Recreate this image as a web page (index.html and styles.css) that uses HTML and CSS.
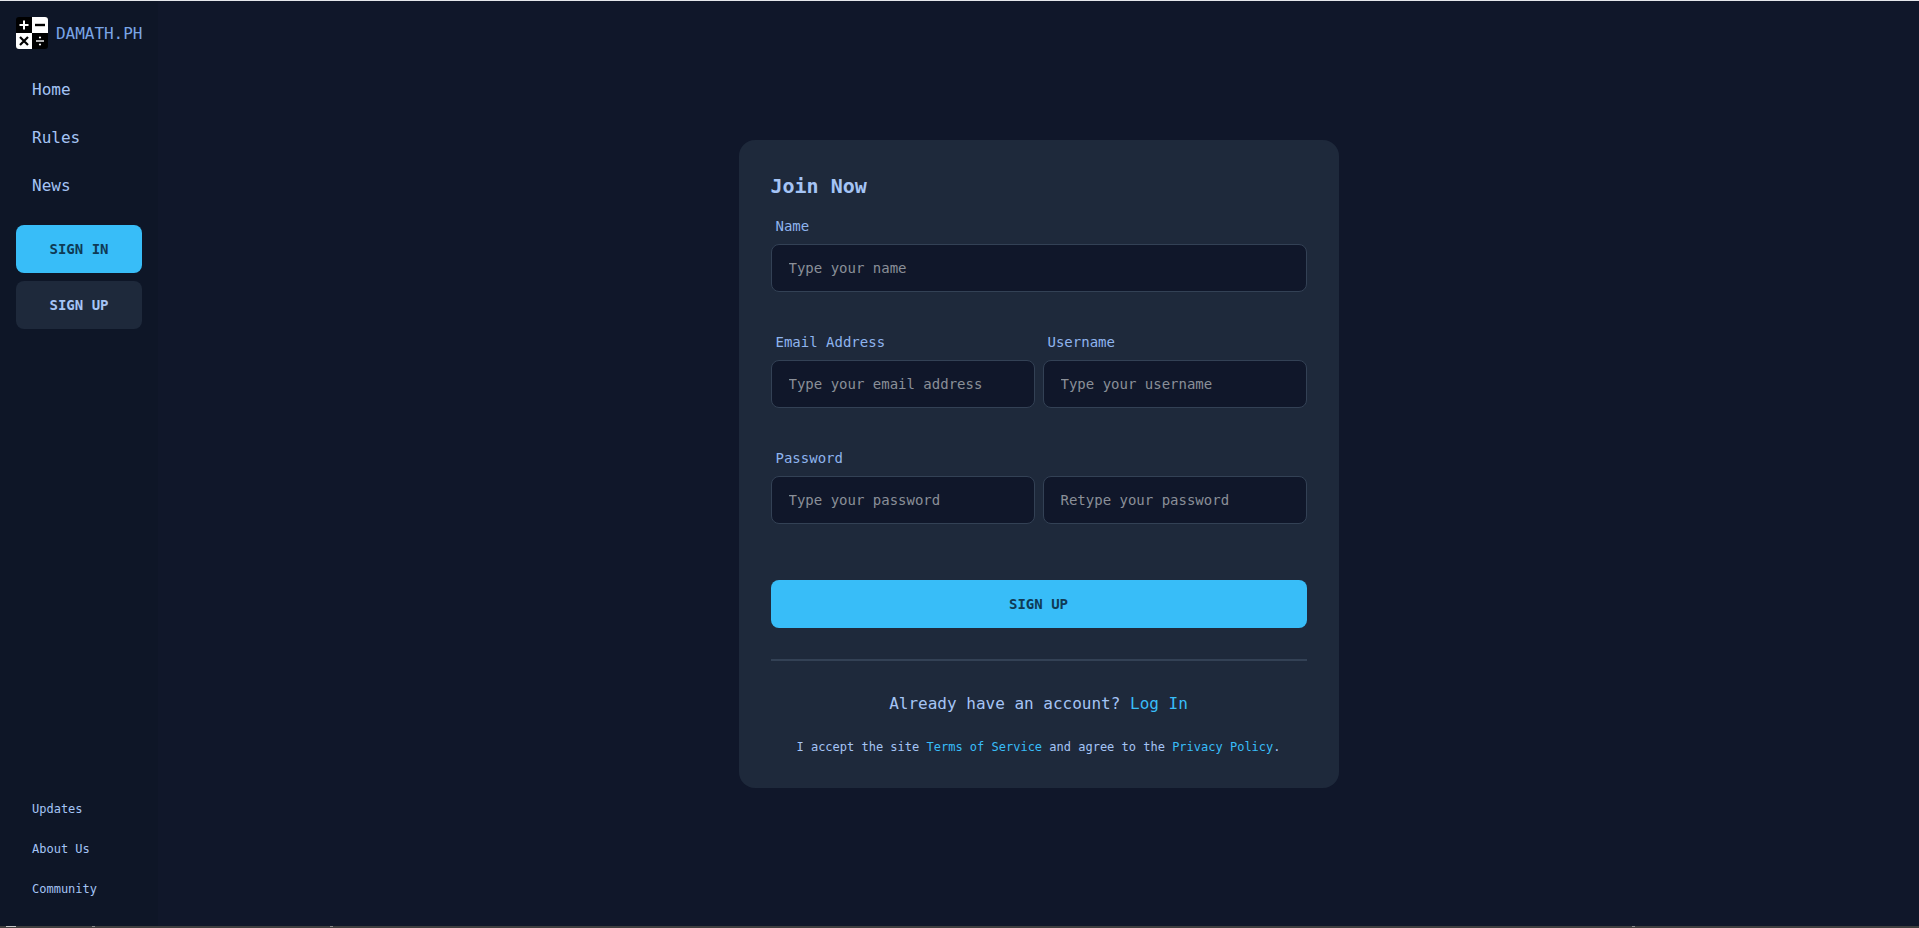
FILE: index.html
```html
<!DOCTYPE html>
<html lang="en">
<head>
    <meta charset="UTF-8">
    <meta name="viewport" content="width=device-width, initial-scale=1.0">
    <title>Damath.ph - Sign Up</title>
    <link rel="stylesheet" href="styles.css">
</head>
<body>
    <div class="app">
        <aside class="sidebar">
            <a class="brand" href="#">
                <svg class="brand-logo" width="32" height="32" viewBox="0 0 32 32">
                    <rect width="32" height="32" rx="3" fill="#000"/>
                    <path d="M16 0h13a3 3 0 0 1 3 3v13H16zM0 16h16v16H3a3 3 0 0 1-3-3z" fill="#fff"/>
                    <path d="M8 3.5v9M3.5 8h9" stroke="#fff" stroke-width="2"/>
                    <path d="M19 8h10" stroke="#000" stroke-width="2.4"/>
                    <path d="M4 20l8 8M12 20l-8 8" stroke="#000" stroke-width="2.2"/>
                    <path d="M20 24h8" stroke="#fff" stroke-width="1.4"/>
                    <circle cx="24" cy="20.5" r="1.1" fill="#fff"/>
                    <circle cx="24" cy="27.5" r="1.1" fill="#fff"/>
                </svg>
                <span>DAMATH.PH</span>
            </a>
            <nav class="main-nav">
                <a href="#">Home</a>
                <a href="#">Rules</a>
                <a href="#">News</a>
            </nav>
            <div class="side-buttons">
                <a class="btn btn-primary" href="#">SIGN IN</a>
                <a class="btn btn-dark" href="#">SIGN UP</a>
            </div>
            <nav class="foot-nav">
                <a href="#">Updates</a>
                <a href="#">About Us</a>
                <a href="#">Community</a>
            </nav>
        </aside>

        <main class="content">
            <form class="card">
                <h1>Join Now</h1>
                <div class="row">
                    <div class="field">
                        <label for="name">Name</label>
                        <input type="text" id="name" placeholder="Type your name">
                    </div>
                </div>
                <div class="row two">
                    <div class="field">
                        <label for="email">Email Address</label>
                        <input type="text" id="email" placeholder="Type your email address">
                    </div>
                    <div class="field">
                        <label for="username">Username</label>
                        <input type="text" id="username" placeholder="Type your username">
                    </div>
                </div>
                <div class="row two">
                    <div class="field">
                        <label for="password">Password</label>
                        <input type="password" id="password" placeholder="Type your password">
                    </div>
                    <div class="field">
                        <label class="blank">&nbsp;</label>
                        <input type="password" id="password2" placeholder="Retype your password">
                    </div>
                </div>
                <button type="submit" class="btn btn-primary submit">SIGN UP</button>
                <hr>
                <p class="login">Already have an account? <a href="#">Log In</a></p>
                <p class="terms">I accept the site <a href="#">Terms of Service</a> and agree to the <a href="#">Privacy Policy</a>.</p>
            </form>
        </main>
    </div>
    <div class="bottom-strip"></div>
</body>
</html>
```

FILE: styles.css
```css
* {
    box-sizing: border-box;
}
html, body {
    height: 100%;
}
body {
    margin: 0;
    display: flex;
    flex-direction: column;
    overflow: hidden;
    background-color: #10172a;
    border-top: 1px solid #e5e7eb;
    font-family: "DejaVu Sans Mono", "Liberation Mono", monospace;
    color: #a5c4f5;
}
a {
    color: inherit;
    text-decoration: none;
}
.app {
    flex: 1;
    display: flex;
    min-height: 0;
}
.sidebar {
    width: 158px;
    flex-shrink: 0;
    display: flex;
    flex-direction: column;
    padding: 16px 16px 0;
    background-color: #0e1627;
}
.brand {
    display: flex;
    align-items: center;
    gap: 8px;
    font-size: 16px;
    letter-spacing: -0.03px;
    color: #7aa5e6;
    white-space: nowrap;
}
.brand-logo {
    flex-shrink: 0;
}
.main-nav {
    display: flex;
    flex-direction: column;
    margin-top: 16px;
}
.main-nav a {
    height: 48px;
    display: flex;
    align-items: center;
    padding-left: 16px;
    font-size: 16px;
}
.side-buttons {
    display: flex;
    flex-direction: column;
    gap: 8px;
    margin-top: 16px;
}
.btn {
    height: 48px;
    display: flex;
    align-items: center;
    justify-content: center;
    border: none;
    border-radius: 8px;
    font-family: inherit;
    font-size: 14px;
    font-weight: bold;
}
.btn-primary {
    background-color: #38bdf8;
    color: #0f3a55;
}
.btn-dark {
    background-color: #1e293b;
    color: #a5c4f5;
}
.foot-nav {
    margin-top: auto;
    display: flex;
    flex-direction: column;
    padding-bottom: 17px;
}
.foot-nav a {
    height: 40px;
    display: flex;
    align-items: center;
    padding-left: 16px;
    font-size: 12px;
}
.content {
    flex: 1;
    display: flex;
    justify-content: center;
    padding-top: 139px;
}
.card {
    width: 600px;
    height: 648px;
    padding: 32px;
    background-color: #1e293b;
    border-radius: 16px;
}
h1 {
    margin: 0 0 16px;
    font-size: 20px;
    line-height: 28px;
    font-weight: bold;
    color: #a5c4f5;
}
.row {
    display: flex;
    gap: 8px;
    margin-bottom: 40px;
}
.field {
    flex: 1;
    min-width: 0;
}
label {
    display: block;
    padding-left: 5px;
    margin-bottom: 8px;
    font-size: 14px;
    line-height: 20px;
    color: #8fb4ee;
}
input {
    width: 100%;
    height: 48px;
    padding: 0 17px;
    background-color: #10172a;
    border: 1px solid #334155;
    border-radius: 8px;
    font-family: inherit;
    font-size: 14px;
    color: #a5c4f5;
}
input::placeholder {
    color: #8a8f98;
    opacity: 1;
}
.submit {
    width: 100%;
    margin-top: 56px;
}
hr {
    margin: 31px 0 0;
    border: none;
    height: 2px;
    background-color: #334155;
}
.login {
    margin: 31px 0 0;
    text-align: center;
    font-size: 16px;
    line-height: 24px;
}
.terms {
    margin: 23px 0 0;
    text-align: center;
    font-size: 12px;
    line-height: 16px;
}
.login a, .terms a {
    color: #38bdf8;
}
.bottom-strip {
    height: 2px;
    flex-shrink: 0;
    background-color: #3f3f3f;
    background-image: linear-gradient(#c8c8c8, #c8c8c8), linear-gradient(#8a8a8a, #8a8a8a), linear-gradient(#8a8a8a, #8a8a8a), linear-gradient(#8a8a8a, #8a8a8a);
    background-size: 10px 1px, 3px 1px, 3px 1px, 3px 1px;
    background-position: 6px 0, 92px 0, 330px 0, 1632px 0;
    background-repeat: no-repeat;
}
```
